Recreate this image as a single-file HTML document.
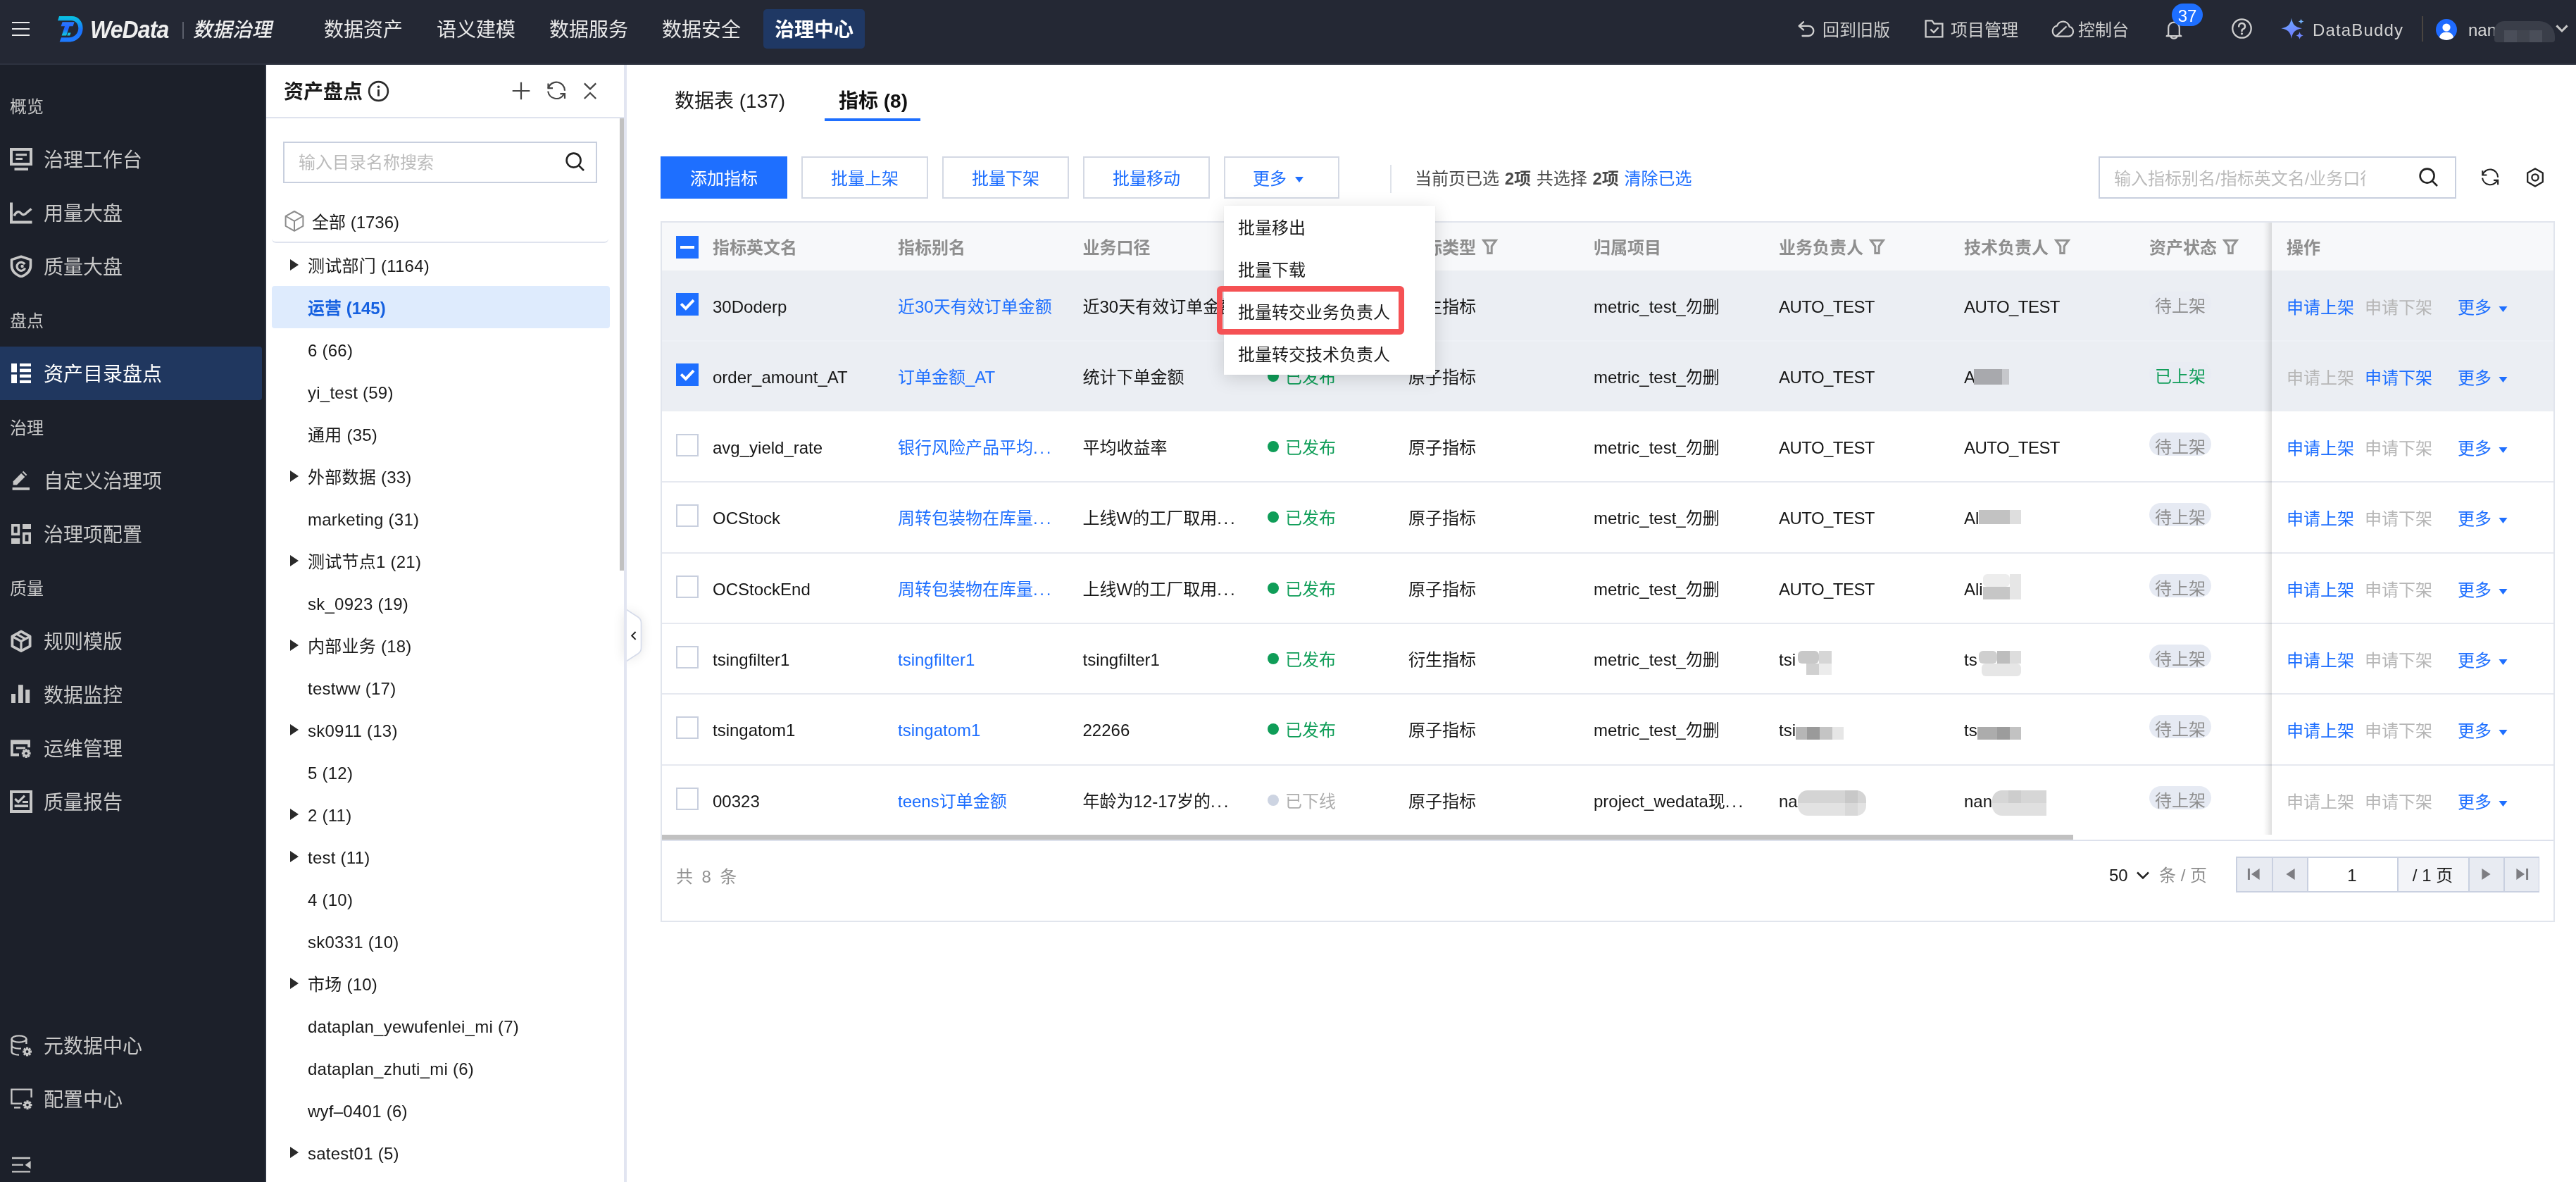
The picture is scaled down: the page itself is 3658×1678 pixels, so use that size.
<!DOCTYPE html>
<html lang="zh-CN"><head><meta charset="utf-8"><title>WeData 数据治理</title><style>
*{box-sizing:border-box}
html,body{margin:0;padding:0;overflow:hidden}
body{width:3658px;height:1678px;position:relative;overflow:hidden;background:#fff;font-family:"Liberation Sans","Noto Sans CJK SC",sans-serif;-webkit-font-smoothing:antialiased}
.t{position:absolute;white-space:nowrap}
#root{position:absolute;left:0;top:0;width:3658px;height:1678px;will-change:transform;transform:translateZ(0)}
.b{position:absolute;display:block}
</style></head><body><div id="root">
<div class="b" style="left:0px;top:0px;width:3658px;height:92px;background:#242834;"></div>
<div class="b" style="left:0px;top:90px;width:3658px;height:2px;background:#2d323f;"></div>
<div class="b" style="left:17px;top:31.2px;width:25px;height:2.2px;background:#ececec;"></div>
<div class="b" style="left:17px;top:40.2px;width:25px;height:2.2px;background:#ececec;"></div>
<div class="b" style="left:17px;top:49.2px;width:25px;height:2.2px;background:#ececec;"></div>
<svg class="b" style="left:81px;top:22px;" width="38" height="38" viewBox="0 0 38 38" fill="none"><defs><linearGradient id="lg1" x1="0" y1="0" x2="0" y2="1"><stop offset="0" stop-color="#08c4e0"/><stop offset="0.55" stop-color="#1a72ff"/><stop offset="1" stop-color="#1e7bff"/></linearGradient><linearGradient id="lg2" x1="0" y1="0" x2="0" y2="1"><stop offset="0" stop-color="#2a78ff"/><stop offset="0.5" stop-color="#1f63ff"/><stop offset="1" stop-color="#0fd0e0"/></linearGradient></defs><path d="M3 1 H21 C30 1 36.6 8.5 36.6 18 C36.6 29 28 37.5 17 37.5 H3.6 L6 31.2 H17 C24.5 31.2 30.3 25.5 30.3 18 C30.3 11.5 26 7.2 20.5 7.2 H1 Z" fill="url(#lg1)"/><path d="M7.6 9.3 H24.6 L22.6 15.2 H17.6 L13.2 28.6 H6.6 L11 15.2 H5.6 Z" fill="url(#lg2)"/><path d="M15.6 24.4 H19.6 L18.2 28.6 H14.2 Z" fill="#18c6e6"/></svg>
<span class="t " style="left:128px;top:20.0px;font-size:32px;line-height:44px;color:#efefef;font-weight:700;letter-spacing:-0.9px;font-style:italic;transform:scaleY(1.08);transform-origin:left center;">WeData</span>
<div class="b" style="left:259px;top:31px;width:2px;height:24px;background:#5b5f6b;"></div>
<span class="t " style="left:276px;top:23.0px;font-size:28px;line-height:40px;color:#efefef;font-weight:500;transform:skewX(-12deg);transform-origin:left center;">数据治理</span>
<span class="t " style="left:460px;top:23.0px;font-size:28px;line-height:40px;color:#e9e9e9;">数据资产</span>
<span class="t " style="left:620px;top:23.0px;font-size:28px;line-height:40px;color:#e9e9e9;">语义建模</span>
<span class="t " style="left:780px;top:23.0px;font-size:28px;line-height:40px;color:#e9e9e9;">数据服务</span>
<span class="t " style="left:940px;top:23.0px;font-size:28px;line-height:40px;color:#e9e9e9;">数据安全</span>
<div class="b" style="left:1084px;top:13px;width:144px;height:56px;background:#1f3864;border-radius:5px;"></div>
<span class="t " style="left:1100px;top:23.0px;font-size:28px;line-height:40px;color:#ffffff;font-weight:700;">治理中心</span>
<svg class="b" style="left:2552px;top:28px;" width="28" height="26" viewBox="0 0 28 26" fill="none"><path d="M9 3.2 L2.6 8.8 L9 14.4 M3.4 8.8 H16.2 A7.1 7.1 0 0 1 16.2 23 H7.5" stroke="#cfcfcf" stroke-width="2.3" stroke-linecap="round" stroke-linejoin="round"/></svg>
<span class="t " style="left:2588px;top:25.0px;font-size:24px;line-height:36px;color:#cfcfcf;">回到旧版</span>
<svg class="b" style="left:2732px;top:27px;" width="30" height="28" viewBox="0 0 30 28" fill="none"><path d="M2.6 2.4 H11.5 L14.5 6.6 H26.4 V25.4 H2.6 Z" stroke="#cfcfcf" stroke-width="2.3" stroke-linejoin="miter"/><path d="M9.4 14.6 L14 19 L20.6 12" stroke="#cfcfcf" stroke-width="2.3"/></svg>
<span class="t " style="left:2770px;top:25.0px;font-size:24px;line-height:36px;color:#cfcfcf;">项目管理</span>
<svg class="b" style="left:2911px;top:27px;" width="36" height="28" viewBox="0 0 36 28" fill="none"><path d="M9.5 24.6 H26.5 A7 7 0 0 0 27.6 10.8 A9.2 9.2 0 0 0 10 9.6 A7.7 7.7 0 0 0 9.5 24.6 Z" stroke="#cfcfcf" stroke-width="2.3" stroke-linejoin="round"/><path d="M9 24.2 L23.5 10.5" stroke="#cfcfcf" stroke-width="2.3"/></svg>
<span class="t " style="left:2951px;top:25.0px;font-size:24px;line-height:36px;color:#cfcfcf;">控制台</span>
<svg class="b" style="left:3075px;top:27px;" width="24" height="30" viewBox="0 0 24 30" fill="none"><path d="M4.2 22.6 V12.4 A7.8 7.8 0 0 1 19.8 12.4 V22.6 L22.4 24.2 H1.6 Z" stroke="#cfcfcf" stroke-width="2.2" stroke-linejoin="round"/><path d="M7.4 24.6 A4.8 4.2 0 0 0 16.6 24.6" stroke="#cfcfcf" stroke-width="2.2"/></svg>
<div class="b" style="left:3084px;top:5px;width:44px;height:32px;background:#1e6fff;border-radius:16px;"></div>
<span class="t " style="left:3084px;top:7.0px;font-size:24px;line-height:32px;color:#fff;width:44px;text-align:center;">37</span>
<svg class="b" style="left:3167.5px;top:25.4px;" width="31" height="31" viewBox="0 0 31 31" fill="none"><circle cx="15.5" cy="15.5" r="13.2" stroke="#cfcfcf" stroke-width="2.3"/><path d="M11.2 12.4 A4.4 4.4 0 1 1 16.6 16.6 Q15.5 17.2 15.5 19" stroke="#cfcfcf" stroke-width="2.5" stroke-linecap="round" fill="none"/><circle cx="15.5" cy="22.8" r="1.6" fill="#cfcfcf"/></svg>
<svg class="b" style="left:3238px;top:24px;" width="36" height="34" viewBox="0 0 36 34" fill="none"><defs><linearGradient id="sp" x1="0" y1="0" x2="0.3" y2="1"><stop offset="0" stop-color="#6db0ff"/><stop offset="1" stop-color="#6f7bff"/></linearGradient></defs><path d="M16 1.5 C17.4 10.5 21 14.6 31 16.3 C21 18 17.4 22 16 31 C14.6 22 11 18 1.5 16.3 C11 14.6 14.6 10.5 16 1.5 Z" fill="url(#sp)"/><path d="M29.6 2.6 C30.1 5.2 31 6.1 33.6 6.6 C31 7.1 30.1 8 29.6 10.6 C29.1 8 28.2 7.1 25.6 6.6 C28.2 6.1 29.1 5.2 29.6 2.6 Z" fill="#74b4ff"/><path d="M27.6 21 C28.3 24.4 29.4 25.6 32.8 26.4 C29.4 27.2 28.3 28.4 27.6 31.8 C26.9 28.4 25.8 27.2 22.4 26.4 C25.8 25.6 26.9 24.4 27.6 21 Z" fill="#6f86ff"/></svg>
<span class="t " style="left:3284px;top:25.0px;font-size:24px;line-height:36px;color:#d2d2d2;letter-spacing:1.15px;">DataBuddy</span>
<div class="b" style="left:3439px;top:23px;width:2px;height:36px;background:#4a4540;"></div>
<svg class="b" style="left:3459px;top:27px;" width="30" height="30" viewBox="0 0 30 30" fill="none"><defs><clipPath id="avc"><circle cx="15" cy="15" r="15"/></clipPath></defs><circle cx="15" cy="15" r="15" fill="#1f6bff"/><g clip-path="url(#avc)"><circle cx="15" cy="12" r="5.6" fill="#fff"/><path d="M4 32 C4 22 9 18.5 15 18.5 C21 18.5 26 22 26 32 Z" fill="#fff"/></g></svg>
<span class="t " style="left:3505px;top:25.0px;font-size:24px;line-height:36px;color:#d8d8d8;">nan</span>
<div class="b" style="left:3542px;top:30px;width:86px;height:30px;background:#3a3e49;border-radius:14px 22px 4px 4px;"></div>
<div class="b" style="left:3556px;top:43px;width:18px;height:17px;background:#4a4e59;"></div>
<div class="b" style="left:3574px;top:43px;width:18px;height:17px;background:#41454f;"></div>
<div class="b" style="left:3592px;top:43px;width:18px;height:17px;background:#4a4e59;"></div>
<svg class="b" style="left:3627px;top:33px;" width="22" height="16" viewBox="0 0 22 16" fill="none"><path d="M3.4 3.4 L11 11 L18.6 3.4" stroke="#c8c8c8" stroke-width="3"/></svg>
<div class="b" style="left:0px;top:92px;width:378px;height:1586px;background:#1c202a;border-right:2px solid #2d3340;"></div>
<span class="t " style="left:14px;top:134.0px;font-size:24px;line-height:36px;color:#c9c9c9;">概览</span>
<svg class="b" style="left:14px;top:210px;" width="32" height="32" viewBox="0 0 32 32" fill="none"><rect x="2" y="2" width="28" height="21" stroke="#c6c6c6" stroke-width="4"/><rect x="8.5" y="8.2" width="15.5" height="3" fill="#c6c6c6"/><rect x="8.5" y="14" width="9.5" height="3" fill="#c6c6c6"/><rect x="6.5" y="28.2" width="19.5" height="3.8" fill="#c6c6c6"/></svg>
<span class="t " style="left:62px;top:208.0px;font-size:28px;line-height:40px;color:#c9c9c9;">治理工作台</span>
<svg class="b" style="left:14px;top:286px;" width="32" height="32" viewBox="0 0 32 32" fill="none"><path d="M2 1.5 V29.5 H31.5" stroke="#c6c6c6" stroke-width="4"/><path d="M6 20.5 C9 14.5 12.5 13 15.5 16.5 C18.5 20 21.5 19 24.5 15.5 L30.5 10.5" stroke="#c6c6c6" stroke-width="3.4"/></svg>
<span class="t " style="left:62px;top:284.0px;font-size:28px;line-height:40px;color:#c9c9c9;">用量大盘</span>
<svg class="b" style="left:14px;top:362px;" width="32" height="32" viewBox="0 0 32 32" fill="none"><path d="M16 2.2 L29.5 6.6 V15 C29.5 23 23.5 28 16 30.8 C8.5 28 2.5 23 2.5 15 V6.6 Z" stroke="#c6c6c6" stroke-width="3.6" stroke-linejoin="round"/><path d="M21.2 13.2 A6 6 0 1 0 21.6 18.6" stroke="#c6c6c6" stroke-width="3.2"/><circle cx="17.6" cy="16" r="2.2" fill="#c6c6c6"/></svg>
<span class="t " style="left:62px;top:360.0px;font-size:28px;line-height:40px;color:#c9c9c9;">质量大盘</span>
<span class="t " style="left:14px;top:438.0px;font-size:24px;line-height:36px;color:#c9c9c9;">盘点</span>
<div class="b" style="left:0px;top:492px;width:372px;height:76px;background:#20375f;border-radius:0 4px 4px 0;"></div>
<svg class="b" style="left:14px;top:514px;" width="32" height="32" viewBox="0 0 32 32" fill="none"><rect x="2" y="2" width="8" height="12.4" fill="#ffffff"/><rect x="2" y="17.6" width="8" height="12.4" fill="#ffffff"/><rect x="14" y="2" width="16" height="4.2" fill="#ffffff"/><rect x="14" y="9.6" width="16" height="4.6" fill="#ffffff"/><rect x="14" y="17.6" width="16" height="4.4" fill="#ffffff"/><rect x="14" y="25.8" width="16" height="4.2" fill="#ffffff"/></svg>
<span class="t " style="left:62px;top:512.0px;font-size:28px;line-height:40px;color:#ffffff;">资产目录盘点</span>
<span class="t " style="left:14px;top:590.0px;font-size:24px;line-height:36px;color:#c9c9c9;">治理</span>
<svg class="b" style="left:14px;top:666px;" width="32" height="32" viewBox="0 0 32 32" fill="none"><path d="M4.6 22.6 V17.4 L19.2 2.8 L24.4 8 L9.8 22.6 Z" fill="#c6c6c6"/><path d="M16.2 4.4 L22.6 10.8" stroke="#1c202a" stroke-width="2.2"/><rect x="3.6" y="26" width="24.4" height="3.8" fill="#c6c6c6"/></svg>
<span class="t " style="left:62px;top:664.0px;font-size:28px;line-height:40px;color:#c9c9c9;">自定义治理项</span>
<svg class="b" style="left:14px;top:742px;" width="32" height="32" viewBox="0 0 32 32" fill="none"><rect x="3.8" y="3.8" width="8.6" height="12.6" stroke="#c6c6c6" stroke-width="3.6"/><rect x="18" y="2" width="12" height="7" fill="#c6c6c6"/><rect x="2" y="22.2" width="12.2" height="7.8" fill="#c6c6c6"/><rect x="19.8" y="15.4" width="8.4" height="12.8" stroke="#c6c6c6" stroke-width="3.6"/></svg>
<span class="t " style="left:62px;top:740.0px;font-size:28px;line-height:40px;color:#c9c9c9;">治理项配置</span>
<span class="t " style="left:14px;top:818.0px;font-size:24px;line-height:36px;color:#c9c9c9;">质量</span>
<svg class="b" style="left:14px;top:894px;" width="32" height="32" viewBox="0 0 32 32" fill="none"><path d="M16 2.4 L28.6 9.4 V23.4 L16 30.2 L3.4 23.4 V9.4 Z" stroke="#c6c6c6" stroke-width="3.8" stroke-linejoin="round"/><path d="M4.4 10 L16 16.4 L27.6 10 M16 16.4 V29.6 M10 6.4 L21.6 12.8" stroke="#c6c6c6" stroke-width="3.2"/></svg>
<span class="t " style="left:62px;top:892.0px;font-size:28px;line-height:40px;color:#c9c9c9;">规则模版</span>
<svg class="b" style="left:14px;top:970px;" width="32" height="32" viewBox="0 0 32 32" fill="none"><rect x="2" y="15" width="6" height="13" fill="#c6c6c6"/><rect x="12" y="2.2" width="6.8" height="25.8" fill="#c6c6c6"/><rect x="22.2" y="9" width="6" height="19" fill="#c6c6c6"/></svg>
<span class="t " style="left:62px;top:968.0px;font-size:28px;line-height:40px;color:#c9c9c9;">数据监控</span>
<svg class="b" style="left:14px;top:1046px;" width="32" height="32" viewBox="0 0 32 32" fill="none"><path d="M13 25.5 H2.9 V6 M27.1 6 V15" stroke="#c6c6c6" stroke-width="3.8"/><rect x="1" y="4.4" width="28" height="6" fill="#c6c6c6"/><rect x="9" y="14.4" width="13" height="3" fill="#c6c6c6"/><path d="M26.72 23.60 L29.60 23.60" stroke="#c6c6c6" stroke-width="3.20"/><path d="M25.69 26.09 L27.73 28.13" stroke="#c6c6c6" stroke-width="3.20"/><path d="M23.20 27.12 L23.20 30.00" stroke="#c6c6c6" stroke-width="3.20"/><path d="M20.71 26.09 L18.67 28.13" stroke="#c6c6c6" stroke-width="3.20"/><path d="M19.68 23.60 L16.80 23.60" stroke="#c6c6c6" stroke-width="3.20"/><path d="M20.71 21.11 L18.67 19.07" stroke="#c6c6c6" stroke-width="3.20"/><path d="M23.20 20.08 L23.20 17.20" stroke="#c6c6c6" stroke-width="3.20"/><path d="M25.69 21.11 L27.73 19.07" stroke="#c6c6c6" stroke-width="3.20"/><circle cx="23.2" cy="23.6" r="4.61" fill="#c6c6c6"/><circle cx="23.2" cy="23.6" r="1.92" fill="#1c202a"/></svg>
<span class="t " style="left:62px;top:1044.0px;font-size:28px;line-height:40px;color:#c9c9c9;">运维管理</span>
<svg class="b" style="left:14px;top:1122px;" width="32" height="32" viewBox="0 0 32 32" fill="none"><rect x="2" y="2" width="28" height="28" stroke="#c6c6c6" stroke-width="4"/><path d="M7.4 12 L12 16.6 L21 7.6" stroke="#c6c6c6" stroke-width="3.2"/><rect x="6.6" y="20.4" width="19.4" height="3.6" fill="#c6c6c6"/><rect x="18" y="15" width="8" height="3" fill="#c6c6c6"/></svg>
<span class="t " style="left:62px;top:1120.0px;font-size:28px;line-height:40px;color:#c9c9c9;">质量报告</span>
<svg class="b" style="left:14px;top:1468px;" width="32" height="32" viewBox="0 0 32 32" fill="none"><ellipse cx="13" cy="7" rx="10.4" ry="4.6" stroke="#c6c6c6" stroke-width="2.4"/><path d="M2.6 7 V25 C2.6 27.6 7 29.6 13 29.6 M23.4 7 V14 M2.6 16 C2.6 18.6 7 20.6 13 20.6 C14 20.6 15 20.5 16 20.4" stroke="#c6c6c6" stroke-width="2.4"/><path d="M28.12 25.00 L31.00 25.00" stroke="#c6c6c6" stroke-width="3.20"/><path d="M27.09 27.49 L29.13 29.53" stroke="#c6c6c6" stroke-width="3.20"/><path d="M24.60 28.52 L24.60 31.40" stroke="#c6c6c6" stroke-width="3.20"/><path d="M22.11 27.49 L20.07 29.53" stroke="#c6c6c6" stroke-width="3.20"/><path d="M21.08 25.00 L18.20 25.00" stroke="#c6c6c6" stroke-width="3.20"/><path d="M22.11 22.51 L20.07 20.47" stroke="#c6c6c6" stroke-width="3.20"/><path d="M24.60 21.48 L24.60 18.60" stroke="#c6c6c6" stroke-width="3.20"/><path d="M27.09 22.51 L29.13 20.47" stroke="#c6c6c6" stroke-width="3.20"/><circle cx="24.6" cy="25" r="4.61" fill="#c6c6c6"/><circle cx="24.6" cy="25" r="1.92" fill="#1c202a"/></svg>
<span class="t " style="left:62px;top:1466.0px;font-size:28px;line-height:40px;color:#c9c9c9;">元数据中心</span>
<svg class="b" style="left:14px;top:1544px;" width="32" height="32" viewBox="0 0 32 32" fill="none"><path d="M17 22.6 H2.4 V2.6 H30.6 V14" stroke="#c6c6c6" stroke-width="2.4"/><path d="M6 28.4 H15" stroke="#c6c6c6" stroke-width="2.4"/><path d="M28.52 24.60 L31.40 24.60" stroke="#c6c6c6" stroke-width="3.20"/><path d="M27.49 27.09 L29.53 29.13" stroke="#c6c6c6" stroke-width="3.20"/><path d="M25.00 28.12 L25.00 31.00" stroke="#c6c6c6" stroke-width="3.20"/><path d="M22.51 27.09 L20.47 29.13" stroke="#c6c6c6" stroke-width="3.20"/><path d="M21.48 24.60 L18.60 24.60" stroke="#c6c6c6" stroke-width="3.20"/><path d="M22.51 22.11 L20.47 20.07" stroke="#c6c6c6" stroke-width="3.20"/><path d="M25.00 21.08 L25.00 18.20" stroke="#c6c6c6" stroke-width="3.20"/><path d="M27.49 22.11 L29.53 20.07" stroke="#c6c6c6" stroke-width="3.20"/><circle cx="25" cy="24.6" r="4.61" fill="#c6c6c6"/><circle cx="25" cy="24.6" r="1.92" fill="#1c202a"/></svg>
<span class="t " style="left:62px;top:1542.0px;font-size:28px;line-height:40px;color:#c9c9c9;">配置中心</span>
<svg class="b" style="left:16px;top:1640px;" width="30" height="28" viewBox="0 0 30 28" fill="none"><path d="M1 4 H27 M1 13.6 H17 M1 23.4 H27" stroke="#c6c6c6" stroke-width="2.4"/><path d="M27.6 8 V19.6 L19.6 13.8 Z" fill="#c6c6c6"/></svg>
<div class="b" style="left:378px;top:92px;width:508px;height:1586px;background:#fff;"></div>
<div class="b" style="left:886px;top:92px;width:4px;height:1586px;background:#e2e5f1;"></div>
<span class="t " style="left:403px;top:111.0px;font-size:28px;line-height:40px;color:#1a1a1a;font-weight:700;">资产盘点</span>
<svg class="b" style="left:522px;top:114px;" width="31" height="31" viewBox="0 0 31 31" fill="none"><circle cx="15.5" cy="15.5" r="13.4" stroke="#2b2b2b" stroke-width="2.6"/><rect x="14.1" y="13" width="2.8" height="9.6" fill="#2b2b2b"/><circle cx="15.5" cy="9.2" r="1.8" fill="#2b2b2b"/></svg>
<svg class="b" style="left:726px;top:115px;" width="28" height="28" viewBox="0 0 28 28" fill="none"><path d="M14 1.7 V26.3 M1.7 14 H26.3" stroke="#454545" stroke-width="2.2"/></svg>
<svg class="b" style="left:776px;top:115px;" width="28" height="28" viewBox="0 0 28 28" fill="none"><path d="M2.5 10.2 A12 12 0 0 1 26 13.7" stroke="#454545" stroke-width="2.2"/><path d="M2.5 3.6 V10.2 H9" stroke="#454545" stroke-width="2.2"/><path d="M2.2 14.6 A12.1 12.1 0 0 0 24.6 19" stroke="#454545" stroke-width="2.2"/><path d="M19.4 18.2 H26 V25" stroke="#454545" stroke-width="2.2"/></svg>
<svg class="b" style="left:828px;top:116px;" width="20" height="26" viewBox="0 0 20 26" fill="none"><path d="M1.8 2.4 L10 10.4 L18.2 2.4 M1.8 24 L10 16 L18.2 24" stroke="#454545" stroke-width="2.3"/></svg>
<div class="b" style="left:378px;top:166px;width:508px;height:2px;background:#dfe3ee;"></div>
<div class="b" style="left:880px;top:168px;width:6px;height:642px;background:#c1c1c1;"></div>
<div class="b" style="left:402px;top:201px;width:446px;height:59px;border:2px solid #c8cfde;background:#fff;"></div>
<span class="t " style="left:424px;top:213.0px;font-size:24px;line-height:36px;color:#bbbbbb;">输入目录名称搜索</span>
<svg class="b" style="left:802px;top:215px;" width="30" height="30" viewBox="0 0 30 30" fill="none"><circle cx="12.6" cy="12.6" r="10" stroke="#222" stroke-width="2.6"/><path d="M19.8 19.8 L27 27" stroke="#222" stroke-width="2.6"/></svg>
<svg class="b" style="left:403px;top:298px;" width="30" height="32" viewBox="0 0 30 32" fill="none"><path d="M15 2 L27.4 8.8 V22.8 L15 29.8 L2.6 22.8 V8.8 Z" stroke="#8c8c8c" stroke-width="2" stroke-linejoin="round"/><path d="M3 9 L15 15.8 L27 9 M15 15.8 V29.4" stroke="#8c8c8c" stroke-width="2"/></svg>
<span class="t " style="left:443px;top:298.0px;font-size:24px;line-height:36px;color:#1a1a1a;">全部 (1736)</span>
<div class="b" style="left:386px;top:300px;width:478px;height:45px;border-bottom:2px solid #dfe3ee;border-radius:0 0 6px 6px;"></div>
<span class="t " style="left:437px;top:360.0px;font-size:24px;line-height:36px;color:#1a1a1a;letter-spacing:0.25px;">测试部门 (1164)</span>
<svg class="b" style="left:411px;top:367px;" width="14" height="18" viewBox="0 0 14 18" fill="none"><path d="M1 1 L13 9 L1 17 Z" fill="#2a2a2a"/></svg>
<div class="b" style="left:386px;top:406px;width:480px;height:60px;background:#deebfd;border-radius:4px;"></div>
<span class="t " style="left:437px;top:420.0px;font-size:24px;line-height:36px;color:#1560e0;font-weight:700;">运营 (145)</span>
<span class="t " style="left:437px;top:480.0px;font-size:24px;line-height:36px;color:#1a1a1a;letter-spacing:0.25px;">6 (66)</span>
<span class="t " style="left:437px;top:540.0px;font-size:24px;line-height:36px;color:#1a1a1a;letter-spacing:0.25px;">yi_test (59)</span>
<span class="t " style="left:437px;top:600.0px;font-size:24px;line-height:36px;color:#1a1a1a;letter-spacing:0.25px;">通用 (35)</span>
<span class="t " style="left:437px;top:660.0px;font-size:24px;line-height:36px;color:#1a1a1a;letter-spacing:0.25px;">外部数据 (33)</span>
<svg class="b" style="left:411px;top:667px;" width="14" height="18" viewBox="0 0 14 18" fill="none"><path d="M1 1 L13 9 L1 17 Z" fill="#2a2a2a"/></svg>
<span class="t " style="left:437px;top:720.0px;font-size:24px;line-height:36px;color:#1a1a1a;letter-spacing:0.25px;">marketing (31)</span>
<span class="t " style="left:437px;top:780.0px;font-size:24px;line-height:36px;color:#1a1a1a;letter-spacing:0.25px;">测试节点1 (21)</span>
<svg class="b" style="left:411px;top:787px;" width="14" height="18" viewBox="0 0 14 18" fill="none"><path d="M1 1 L13 9 L1 17 Z" fill="#2a2a2a"/></svg>
<span class="t " style="left:437px;top:840.0px;font-size:24px;line-height:36px;color:#1a1a1a;letter-spacing:0.25px;">sk_0923 (19)</span>
<span class="t " style="left:437px;top:900.0px;font-size:24px;line-height:36px;color:#1a1a1a;letter-spacing:0.25px;">内部业务 (18)</span>
<svg class="b" style="left:411px;top:907px;" width="14" height="18" viewBox="0 0 14 18" fill="none"><path d="M1 1 L13 9 L1 17 Z" fill="#2a2a2a"/></svg>
<span class="t " style="left:437px;top:960.0px;font-size:24px;line-height:36px;color:#1a1a1a;letter-spacing:0.25px;">testww (17)</span>
<span class="t " style="left:437px;top:1020.0px;font-size:24px;line-height:36px;color:#1a1a1a;letter-spacing:0.25px;">sk0911 (13)</span>
<svg class="b" style="left:411px;top:1027px;" width="14" height="18" viewBox="0 0 14 18" fill="none"><path d="M1 1 L13 9 L1 17 Z" fill="#2a2a2a"/></svg>
<span class="t " style="left:437px;top:1080.0px;font-size:24px;line-height:36px;color:#1a1a1a;letter-spacing:0.25px;">5 (12)</span>
<span class="t " style="left:437px;top:1140.0px;font-size:24px;line-height:36px;color:#1a1a1a;letter-spacing:0.25px;">2 (11)</span>
<svg class="b" style="left:411px;top:1147px;" width="14" height="18" viewBox="0 0 14 18" fill="none"><path d="M1 1 L13 9 L1 17 Z" fill="#2a2a2a"/></svg>
<span class="t " style="left:437px;top:1200.0px;font-size:24px;line-height:36px;color:#1a1a1a;letter-spacing:0.25px;">test (11)</span>
<svg class="b" style="left:411px;top:1207px;" width="14" height="18" viewBox="0 0 14 18" fill="none"><path d="M1 1 L13 9 L1 17 Z" fill="#2a2a2a"/></svg>
<span class="t " style="left:437px;top:1260.0px;font-size:24px;line-height:36px;color:#1a1a1a;letter-spacing:0.25px;">4 (10)</span>
<span class="t " style="left:437px;top:1320.0px;font-size:24px;line-height:36px;color:#1a1a1a;letter-spacing:0.25px;">sk0331 (10)</span>
<span class="t " style="left:437px;top:1380.0px;font-size:24px;line-height:36px;color:#1a1a1a;letter-spacing:0.25px;">市场 (10)</span>
<svg class="b" style="left:411px;top:1387px;" width="14" height="18" viewBox="0 0 14 18" fill="none"><path d="M1 1 L13 9 L1 17 Z" fill="#2a2a2a"/></svg>
<span class="t " style="left:437px;top:1440.0px;font-size:24px;line-height:36px;color:#1a1a1a;letter-spacing:0.25px;">dataplan_yewufenlei_mi (7)</span>
<span class="t " style="left:437px;top:1500.0px;font-size:24px;line-height:36px;color:#1a1a1a;letter-spacing:0.25px;">dataplan_zhuti_mi (6)</span>
<span class="t " style="left:437px;top:1560.0px;font-size:24px;line-height:36px;color:#1a1a1a;letter-spacing:0.25px;">wyf–0401 (6)</span>
<span class="t " style="left:437px;top:1620.0px;font-size:24px;line-height:36px;color:#1a1a1a;letter-spacing:0.25px;">satest01 (5)</span>
<svg class="b" style="left:411px;top:1627px;" width="14" height="18" viewBox="0 0 14 18" fill="none"><path d="M1 1 L13 9 L1 17 Z" fill="#2a2a2a"/></svg>
<svg class="b" style="left:866px;top:840px;" width="70" height="124" viewBox="0 0 70 124" fill="none"><defs><filter id="hs" x="-100%" y="-50%" width="300%" height="200%"><feGaussianBlur stdDeviation="9"/></filter></defs><path d="M22 26 L40 37 Q44 40 44 45 V79 Q44 84 40 87 L22 98 Z" fill="#000" opacity="0.13" filter="url(#hs)"/><path d="M23 25 L40 36 Q44.5 39 44.5 44 V80 Q44.5 85 40 88 L23 99 Z" fill="#fff" stroke="#d5dbea" stroke-width="1.6"/><path d="M36.6 57 L31.2 62.4 L36.6 67.8" stroke="#1a1a1a" stroke-width="1.9"/></svg>
<div class="b" style="left:886px;top:92px;width:4px;height:1586px;background:#e2e5f1;"></div>
<span class="t " style="left:958px;top:124.0px;font-size:28px;line-height:40px;color:#1a1a1a;">数据表 (137)</span>
<span class="t " style="left:1191px;top:124.0px;font-size:28px;line-height:40px;color:#111;font-weight:700;">指标 (8)</span>
<div class="b" style="left:1171px;top:168px;width:136px;height:4px;background:#1e6fff;"></div>
<div class="b" style="left:938px;top:222px;width:180px;height:60px;background:#1e6fff;"></div>
<span class="t " style="left:938px;top:236.0px;font-size:24px;line-height:36px;color:#fff;width:180px;text-align:center;">添加指标</span>
<div class="b" style="left:1138px;top:222px;width:180px;height:60px;border:2px solid #d4d9e4;background:#fff;"></div>
<span class="t " style="left:1138px;top:236.0px;font-size:24px;line-height:36px;color:#1e6fff;width:180px;text-align:center;">批量上架</span>
<div class="b" style="left:1338px;top:222px;width:180px;height:60px;border:2px solid #d4d9e4;background:#fff;"></div>
<span class="t " style="left:1338px;top:236.0px;font-size:24px;line-height:36px;color:#1e6fff;width:180px;text-align:center;">批量下架</span>
<div class="b" style="left:1538px;top:222px;width:180px;height:60px;border:2px solid #d4d9e4;background:#fff;"></div>
<span class="t " style="left:1538px;top:236.0px;font-size:24px;line-height:36px;color:#1e6fff;width:180px;text-align:center;">批量移动</span>
<div class="b" style="left:1738px;top:222px;width:164px;height:60px;border:2px solid #d4d9e4;background:#fff;"></div>
<span class="t " style="left:1779px;top:236.0px;font-size:24px;line-height:36px;color:#1e6fff;">更多</span>
<svg class="b" style="left:1838px;top:250px;" width="14" height="10" viewBox="0 0 14 10" fill="none"><path d="M1 1 H13 L7 9 Z" fill="#1e6fff"/></svg>
<div class="b" style="left:1974px;top:234px;width:2px;height:40px;background:#dfe3ea;"></div>
<span class="t " style="left:2009px;top:236.0px;font-size:24px;line-height:36px;color:#4a4a4a;word-spacing:1px;">当前页已选 <b style="color:#4a4a4a">2项</b> 共选择 <b style="color:#4a4a4a">2项</b> <span style="color:#1e6fff">清除已选</span></span>
<div class="b" style="left:2980px;top:222px;width:508px;height:60px;border:2px solid #c8cfde;background:#fff;"></div>
<span class="t " style="left:3002px;top:236.0px;font-size:24px;line-height:36px;color:#bbbbbb;width:357px;overflow:hidden;">输入指标别名/指标英文名/业务口径</span>
<svg class="b" style="left:3434px;top:236.5px;" width="30" height="30" viewBox="0 0 30 30" fill="none"><circle cx="12.6" cy="12.6" r="10" stroke="#222" stroke-width="2.6"/><path d="M19.8 19.8 L27 27" stroke="#222" stroke-width="2.6"/></svg>
<svg class="b" style="left:3523px;top:239px;" width="26" height="26" viewBox="0 0 28 28" fill="none"><path d="M2.5 10.2 A12 12 0 0 1 26 13.7" stroke="#222" stroke-width="2.3"/><path d="M2.5 3.6 V10.2 H9" stroke="#222" stroke-width="2.3"/><path d="M2.2 14.6 A12.1 12.1 0 0 0 24.6 19" stroke="#222" stroke-width="2.3"/><path d="M19.4 18.2 H26 V25" stroke="#222" stroke-width="2.3"/></svg>
<svg class="b" style="left:3585px;top:236px;" width="30" height="32" viewBox="0 0 30 32" fill="none"><path d="M15 3.4 L25.8 9.6 V22.2 L15 28.4 L4.2 22.2 V9.6 Z" stroke="#222" stroke-width="2.3" stroke-linejoin="round"/><circle cx="15" cy="15.9" r="4.6" stroke="#222" stroke-width="2.3"/></svg>
<div class="b" style="left:938px;top:314px;width:2690px;height:995px;border:2px solid #e1e5ed;background:#fff;"></div>
<div class="b" style="left:940px;top:316px;width:2686px;height:68px;background:#f7f8fa;"></div>
<div class="b" style="left:940px;top:384px;width:2686px;height:200px;background:#ebeef3;"></div>
<div class="b" style="left:940px;top:483px;width:2686px;height:2px;background:#eef1f6;"></div>
<div class="b" style="left:940px;top:683.3px;width:2686px;height:2px;background:#e6e9f0;"></div>
<div class="b" style="left:940px;top:783.6px;width:2686px;height:2px;background:#e6e9f0;"></div>
<div class="b" style="left:940px;top:884px;width:2686px;height:2px;background:#e6e9f0;"></div>
<div class="b" style="left:940px;top:984.3px;width:2686px;height:2px;background:#e6e9f0;"></div>
<div class="b" style="left:940px;top:1084.6px;width:2686px;height:2px;background:#e6e9f0;"></div>

<span class="t " style="left:1012px;top:334.0px;font-size:24px;line-height:36px;color:#8e8e8e;font-weight:700;">指标英文名</span>
<span class="t " style="left:1275px;top:334.0px;font-size:24px;line-height:36px;color:#8e8e8e;font-weight:700;">指标别名</span>
<span class="t " style="left:1537.5px;top:334.0px;font-size:24px;line-height:36px;color:#8e8e8e;font-weight:700;">业务口径</span>
<span class="t " style="left:1800px;top:334.0px;font-size:24px;line-height:36px;color:#8e8e8e;font-weight:700;">状态</span>
<span class="t " style="left:2000px;top:334.0px;font-size:24px;line-height:36px;color:#8e8e8e;font-weight:700;">指标类型</span>
<svg class="b" style="left:2104px;top:339px;" width="24" height="24" viewBox="0 0 24 24" fill="none"><path d="M2.6 2.2 H20.4 L14.2 10.6 V20.4 H8.8 V10.6 Z" stroke="#939393" stroke-width="3" stroke-linejoin="miter"/></svg>
<span class="t " style="left:2263px;top:334.0px;font-size:24px;line-height:36px;color:#8e8e8e;font-weight:700;">归属项目</span>
<span class="t " style="left:2526px;top:334.0px;font-size:24px;line-height:36px;color:#8e8e8e;font-weight:700;">业务负责人</span>
<svg class="b" style="left:2654px;top:339px;" width="24" height="24" viewBox="0 0 24 24" fill="none"><path d="M2.6 2.2 H20.4 L14.2 10.6 V20.4 H8.8 V10.6 Z" stroke="#939393" stroke-width="3" stroke-linejoin="miter"/></svg>
<span class="t " style="left:2789px;top:334.0px;font-size:24px;line-height:36px;color:#8e8e8e;font-weight:700;">技术负责人</span>
<svg class="b" style="left:2917px;top:339px;" width="24" height="24" viewBox="0 0 24 24" fill="none"><path d="M2.6 2.2 H20.4 L14.2 10.6 V20.4 H8.8 V10.6 Z" stroke="#939393" stroke-width="3" stroke-linejoin="miter"/></svg>
<span class="t " style="left:3052px;top:334.0px;font-size:24px;line-height:36px;color:#8e8e8e;font-weight:700;">资产状态</span>
<svg class="b" style="left:3156px;top:339px;" width="24" height="24" viewBox="0 0 24 24" fill="none"><path d="M2.6 2.2 H20.4 L14.2 10.6 V20.4 H8.8 V10.6 Z" stroke="#939393" stroke-width="3" stroke-linejoin="miter"/></svg>
<div class="b" style="left:960px;top:335px;width:32px;height:32px;background:#1e6fff;"></div>
<div class="b" style="left:966px;top:349px;width:20px;height:4px;background:#fff;"></div>
<div class="b" style="left:960px;top:416.1px;width:32px;height:32px;background:#1e6fff;"></div>
<svg class="b" style="left:960px;top:416.1px;" width="32" height="32" viewBox="0 0 32 32" fill="none"><path d="M7.2 15.4 L13.8 22 L25 10.2" stroke="#fff" stroke-width="4"/></svg>
<span class="t " style="left:1012px;top:418.1px;font-size:24px;line-height:36px;color:#161616;">30Doderp</span>
<span class="t " style="left:1275px;top:418.1px;font-size:24px;line-height:36px;color:#1e6fff;">近30天有效订单金额</span>
<span class="t " style="left:1537.5px;top:418.1px;font-size:24px;line-height:36px;color:#161616;">近30天有效订单金额</span>
<div class="b" style="left:1800px;top:426.1px;width:16px;height:16px;background:#0f9d58;border-radius:50%;"></div>
<span class="t " style="left:1825px;top:418.1px;font-size:24px;line-height:36px;color:#0f9d58;">已发布</span>
<span class="t " style="left:2000px;top:418.1px;font-size:24px;line-height:36px;color:#161616;">衍生指标</span>
<span class="t " style="left:2263px;top:418.1px;font-size:24px;line-height:36px;color:#161616;">metric_test_勿删</span>
<span class="t " style="left:2526px;top:418.1px;font-size:24px;line-height:36px;color:#161616;letter-spacing:-0.55px;">AUTO_TEST</span>
<span class="t " style="left:2789px;top:418.1px;font-size:24px;line-height:36px;color:#161616;letter-spacing:-0.55px;">AUTO_TEST</span>
<div class="b" style="left:3052px;top:414.1px;width:88px;height:33px;background:#e9ecf3;border-radius:17px;"></div>
<span class="t " style="left:3052px;top:417.1px;font-size:24px;line-height:36px;color:#8e8e8e;width:88px;text-align:center;">待上架</span>
<div class="b" style="left:960px;top:516.1px;width:32px;height:32px;background:#1e6fff;"></div>
<svg class="b" style="left:960px;top:516.1px;" width="32" height="32" viewBox="0 0 32 32" fill="none"><path d="M7.2 15.4 L13.8 22 L25 10.2" stroke="#fff" stroke-width="4"/></svg>
<span class="t " style="left:1012px;top:518.1px;font-size:24px;line-height:36px;color:#161616;">order_amount_AT</span>
<span class="t " style="left:1275px;top:518.1px;font-size:24px;line-height:36px;color:#1e6fff;">订单金额_AT</span>
<span class="t " style="left:1537.5px;top:518.1px;font-size:24px;line-height:36px;color:#161616;">统计下单金额</span>
<div class="b" style="left:1800px;top:526.1px;width:16px;height:16px;background:#0f9d58;border-radius:50%;"></div>
<span class="t " style="left:1825px;top:518.1px;font-size:24px;line-height:36px;color:#0f9d58;">已发布</span>
<span class="t " style="left:2000px;top:518.1px;font-size:24px;line-height:36px;color:#161616;">原子指标</span>
<span class="t " style="left:2263px;top:518.1px;font-size:24px;line-height:36px;color:#161616;">metric_test_勿删</span>
<span class="t " style="left:2526px;top:518.1px;font-size:24px;line-height:36px;color:#161616;letter-spacing:-0.55px;">AUTO_TEST</span>
<span class="t " style="left:2789px;top:518.1px;font-size:24px;line-height:36px;color:#161616;">A</span>
<div class="b" style="left:3052px;top:514.1px;width:88px;height:33px;background:#e9ecf3;border-radius:17px;"></div>
<span class="t " style="left:3052px;top:517.1px;font-size:24px;line-height:36px;color:#0f9d58;width:88px;text-align:center;">已上架</span>
<div class="b" style="left:960px;top:616.1px;width:32px;height:32px;border:2px solid #c8cfde;background:#fff;"></div>
<span class="t " style="left:1012px;top:618.1px;font-size:24px;line-height:36px;color:#161616;">avg_yield_rate</span>
<span class="t " style="left:1275px;top:618.1px;font-size:24px;line-height:36px;color:#1e6fff;">银行风险产品平均<span style="letter-spacing:2.7px">...</span></span>
<span class="t " style="left:1537.5px;top:618.1px;font-size:24px;line-height:36px;color:#161616;">平均收益率</span>
<div class="b" style="left:1800px;top:626.1px;width:16px;height:16px;background:#0f9d58;border-radius:50%;"></div>
<span class="t " style="left:1825px;top:618.1px;font-size:24px;line-height:36px;color:#0f9d58;">已发布</span>
<span class="t " style="left:2000px;top:618.1px;font-size:24px;line-height:36px;color:#161616;">原子指标</span>
<span class="t " style="left:2263px;top:618.1px;font-size:24px;line-height:36px;color:#161616;">metric_test_勿删</span>
<span class="t " style="left:2526px;top:618.1px;font-size:24px;line-height:36px;color:#161616;letter-spacing:-0.55px;">AUTO_TEST</span>
<span class="t " style="left:2789px;top:618.1px;font-size:24px;line-height:36px;color:#161616;letter-spacing:-0.55px;">AUTO_TEST</span>
<div class="b" style="left:3052px;top:614.1px;width:88px;height:33px;background:#e6eaf3;border-radius:17px;"></div>
<span class="t " style="left:3052px;top:617.1px;font-size:24px;line-height:36px;color:#8e8e8e;width:88px;text-align:center;">待上架</span>
<div class="b" style="left:960px;top:716.4px;width:32px;height:32px;border:2px solid #c8cfde;background:#fff;"></div>
<span class="t " style="left:1012px;top:718.4px;font-size:24px;line-height:36px;color:#161616;">OCStock</span>
<span class="t " style="left:1275px;top:718.4px;font-size:24px;line-height:36px;color:#1e6fff;">周转包装物在库量<span style="letter-spacing:2.7px">...</span></span>
<span class="t " style="left:1537.5px;top:718.4px;font-size:24px;line-height:36px;color:#161616;">上线W的工厂取用<span style="letter-spacing:2.7px">...</span></span>
<div class="b" style="left:1800px;top:726.4px;width:16px;height:16px;background:#0f9d58;border-radius:50%;"></div>
<span class="t " style="left:1825px;top:718.4px;font-size:24px;line-height:36px;color:#0f9d58;">已发布</span>
<span class="t " style="left:2000px;top:718.4px;font-size:24px;line-height:36px;color:#161616;">原子指标</span>
<span class="t " style="left:2263px;top:718.4px;font-size:24px;line-height:36px;color:#161616;">metric_test_勿删</span>
<span class="t " style="left:2526px;top:718.4px;font-size:24px;line-height:36px;color:#161616;letter-spacing:-0.55px;">AUTO_TEST</span>
<span class="t " style="left:2789px;top:718.4px;font-size:24px;line-height:36px;color:#161616;">Al</span>
<div class="b" style="left:3052px;top:714.4px;width:88px;height:33px;background:#e6eaf3;border-radius:17px;"></div>
<span class="t " style="left:3052px;top:717.4px;font-size:24px;line-height:36px;color:#8e8e8e;width:88px;text-align:center;">待上架</span>
<div class="b" style="left:960px;top:816.7px;width:32px;height:32px;border:2px solid #c8cfde;background:#fff;"></div>
<span class="t " style="left:1012px;top:818.7px;font-size:24px;line-height:36px;color:#161616;">OCStockEnd</span>
<span class="t " style="left:1275px;top:818.7px;font-size:24px;line-height:36px;color:#1e6fff;">周转包装物在库量<span style="letter-spacing:2.7px">...</span></span>
<span class="t " style="left:1537.5px;top:818.7px;font-size:24px;line-height:36px;color:#161616;">上线W的工厂取用<span style="letter-spacing:2.7px">...</span></span>
<div class="b" style="left:1800px;top:826.7px;width:16px;height:16px;background:#0f9d58;border-radius:50%;"></div>
<span class="t " style="left:1825px;top:818.7px;font-size:24px;line-height:36px;color:#0f9d58;">已发布</span>
<span class="t " style="left:2000px;top:818.7px;font-size:24px;line-height:36px;color:#161616;">原子指标</span>
<span class="t " style="left:2263px;top:818.7px;font-size:24px;line-height:36px;color:#161616;">metric_test_勿删</span>
<span class="t " style="left:2526px;top:818.7px;font-size:24px;line-height:36px;color:#161616;letter-spacing:-0.55px;">AUTO_TEST</span>
<span class="t " style="left:2789px;top:818.7px;font-size:24px;line-height:36px;color:#161616;">Ali</span>
<div class="b" style="left:3052px;top:814.7px;width:88px;height:33px;background:#e6eaf3;border-radius:17px;"></div>
<span class="t " style="left:3052px;top:817.7px;font-size:24px;line-height:36px;color:#8e8e8e;width:88px;text-align:center;">待上架</span>
<div class="b" style="left:960px;top:917.1px;width:32px;height:32px;border:2px solid #c8cfde;background:#fff;"></div>
<span class="t " style="left:1012px;top:919.1px;font-size:24px;line-height:36px;color:#161616;">tsingfilter1</span>
<span class="t " style="left:1275px;top:919.1px;font-size:24px;line-height:36px;color:#1e6fff;">tsingfilter1</span>
<span class="t " style="left:1537.5px;top:919.1px;font-size:24px;line-height:36px;color:#161616;">tsingfilter1</span>
<div class="b" style="left:1800px;top:927.1px;width:16px;height:16px;background:#0f9d58;border-radius:50%;"></div>
<span class="t " style="left:1825px;top:919.1px;font-size:24px;line-height:36px;color:#0f9d58;">已发布</span>
<span class="t " style="left:2000px;top:919.1px;font-size:24px;line-height:36px;color:#161616;">衍生指标</span>
<span class="t " style="left:2263px;top:919.1px;font-size:24px;line-height:36px;color:#161616;">metric_test_勿删</span>
<span class="t " style="left:2526px;top:919.1px;font-size:24px;line-height:36px;color:#161616;">tsi</span>
<span class="t " style="left:2789px;top:919.1px;font-size:24px;line-height:36px;color:#161616;">ts</span>
<div class="b" style="left:3052px;top:915.1px;width:88px;height:33px;background:#e6eaf3;border-radius:17px;"></div>
<span class="t " style="left:3052px;top:918.1px;font-size:24px;line-height:36px;color:#8e8e8e;width:88px;text-align:center;">待上架</span>
<div class="b" style="left:960px;top:1017.3999999999999px;width:32px;height:32px;border:2px solid #c8cfde;background:#fff;"></div>
<span class="t " style="left:1012px;top:1019.3999999999999px;font-size:24px;line-height:36px;color:#161616;">tsingatom1</span>
<span class="t " style="left:1275px;top:1019.3999999999999px;font-size:24px;line-height:36px;color:#1e6fff;">tsingatom1</span>
<span class="t " style="left:1537.5px;top:1019.3999999999999px;font-size:24px;line-height:36px;color:#161616;">22266</span>
<div class="b" style="left:1800px;top:1027.3999999999999px;width:16px;height:16px;background:#0f9d58;border-radius:50%;"></div>
<span class="t " style="left:1825px;top:1019.3999999999999px;font-size:24px;line-height:36px;color:#0f9d58;">已发布</span>
<span class="t " style="left:2000px;top:1019.3999999999999px;font-size:24px;line-height:36px;color:#161616;">原子指标</span>
<span class="t " style="left:2263px;top:1019.3999999999999px;font-size:24px;line-height:36px;color:#161616;">metric_test_勿删</span>
<span class="t " style="left:2526px;top:1019.3999999999999px;font-size:24px;line-height:36px;color:#161616;">tsi</span>
<span class="t " style="left:2789px;top:1019.3999999999999px;font-size:24px;line-height:36px;color:#161616;">ts</span>
<div class="b" style="left:3052px;top:1015.3999999999999px;width:88px;height:33px;background:#e6eaf3;border-radius:17px;"></div>
<span class="t " style="left:3052px;top:1018.3999999999999px;font-size:24px;line-height:36px;color:#8e8e8e;width:88px;text-align:center;">待上架</span>
<div class="b" style="left:960px;top:1117.6999999999998px;width:32px;height:32px;border:2px solid #c8cfde;background:#fff;"></div>
<span class="t " style="left:1012px;top:1119.6999999999998px;font-size:24px;line-height:36px;color:#161616;">00323</span>
<span class="t " style="left:1275px;top:1119.6999999999998px;font-size:24px;line-height:36px;color:#1e6fff;">teens订单金额</span>
<span class="t " style="left:1537.5px;top:1119.6999999999998px;font-size:24px;line-height:36px;color:#161616;">年龄为12-17岁的<span style="letter-spacing:2.7px">...</span></span>
<div class="b" style="left:1800px;top:1127.6999999999998px;width:16px;height:16px;background:#cdd4e2;border-radius:50%;"></div>
<span class="t " style="left:1825px;top:1119.6999999999998px;font-size:24px;line-height:36px;color:#adadad;">已下线</span>
<span class="t " style="left:2000px;top:1119.6999999999998px;font-size:24px;line-height:36px;color:#161616;">原子指标</span>
<span class="t " style="left:2263px;top:1119.6999999999998px;font-size:24px;line-height:36px;color:#161616;">project_wedata现<span style="letter-spacing:2.7px">...</span></span>
<span class="t " style="left:2526px;top:1119.6999999999998px;font-size:24px;line-height:36px;color:#161616;">na</span>
<span class="t " style="left:2789px;top:1119.6999999999998px;font-size:24px;line-height:36px;color:#161616;">nan</span>
<div class="b" style="left:3052px;top:1115.6999999999998px;width:88px;height:33px;background:#e6eaf3;border-radius:17px;"></div>
<span class="t " style="left:3052px;top:1118.6999999999998px;font-size:24px;line-height:36px;color:#8e8e8e;width:88px;text-align:center;">待上架</span>
<div class="b" style="left:2803px;top:524.1px;width:40px;height:22px;background:#a8a9ad;border-radius:0px;"></div>
<div class="b" style="left:2843px;top:524.1px;width:10px;height:22px;background:#c6c7cb;border-radius:0px;"></div>
<div class="b" style="left:2810px;top:724.4px;width:44px;height:20px;background:#c2c2c2;border-radius:0px;"></div>
<div class="b" style="left:2854px;top:724.4px;width:16px;height:20px;background:#dedede;border-radius:0px;"></div>
<div class="b" style="left:2816px;top:814.7px;width:38px;height:18px;background:#ededed;border-radius:6px;"></div>
<div class="b" style="left:2816px;top:832.7px;width:38px;height:18px;background:#c6c6c6;border-radius:0px;"></div>
<div class="b" style="left:2854px;top:814.7px;width:16px;height:36px;background:#e6e6e6;border-radius:0px;"></div>
<div class="b" style="left:2553px;top:924.1px;width:30px;height:18px;background:#c8c8c8;border-radius:6px;"></div>
<div class="b" style="left:2583px;top:924.1px;width:18px;height:18px;background:#d6d6d6;border-radius:0px;"></div>
<div class="b" style="left:2565px;top:942.1px;width:18px;height:16px;background:#d0d0d0;border-radius:0px;"></div>
<div class="b" style="left:2583px;top:942.1px;width:18px;height:16px;background:#ececec;border-radius:0px;"></div>
<div class="b" style="left:2810px;top:924.1px;width:26px;height:18px;background:#cfcfcf;border-radius:6px;"></div>
<div class="b" style="left:2836px;top:924.1px;width:18px;height:18px;background:#bdbdbd;border-radius:0px;"></div>
<div class="b" style="left:2854px;top:924.1px;width:16px;height:18px;background:#dddddd;border-radius:0px;"></div>
<div class="b" style="left:2814px;top:942.1px;width:56px;height:18px;background:#e6e6e6;border-radius:6px;"></div>
<div class="b" style="left:2550px;top:1032.3999999999999px;width:16px;height:18px;background:#b6b6b6;border-radius:0px;"></div>
<div class="b" style="left:2566px;top:1032.3999999999999px;width:18px;height:18px;background:#9a9a9a;border-radius:0px;"></div>
<div class="b" style="left:2584px;top:1032.3999999999999px;width:18px;height:18px;background:#c4c4c4;border-radius:0px;"></div>
<div class="b" style="left:2602px;top:1032.3999999999999px;width:16px;height:18px;background:#e6e6e6;border-radius:0px;"></div>
<div class="b" style="left:2808px;top:1032.3999999999999px;width:28px;height:18px;background:#acacac;border-radius:0px;"></div>
<div class="b" style="left:2836px;top:1032.3999999999999px;width:18px;height:18px;background:#9c9c9c;border-radius:0px;"></div>
<div class="b" style="left:2854px;top:1032.3999999999999px;width:16px;height:18px;background:#c2c2c2;border-radius:0px;"></div>
<div class="b" style="left:2553px;top:1121.6999999999998px;width:97px;height:36px;background:linear-gradient(#d4d4d4 0,#d4d4d4 50%,#e2e2e2 50%);border-radius:14px;"></div>
<div class="b" style="left:2620px;top:1121.6999999999998px;width:18px;height:36px;background:linear-gradient(#c8c8c8 0,#c8c8c8 50%,#d8d8d8 50%);"></div>
<div class="b" style="left:2829px;top:1121.6999999999998px;width:77px;height:36px;background:linear-gradient(#d6d6d6 0,#d6d6d6 50%,#e0e0e0 50%);border-radius:14px 0 0 14px;"></div>
<div class="b" style="left:2852px;top:1121.6999999999998px;width:18px;height:18px;background:#cdcdcd;"></div>
<div class="b" style="left:940px;top:1185px;width:2004px;height:7px;background:#c1c1c1;"></div>
<div class="b" style="left:940px;top:1192px;width:2686px;height:2px;background:#dde1ec;"></div>
<div class="b" style="left:3214px;top:316px;width:12px;height:869px;background:linear-gradient(to right, rgba(0,0,0,0), rgba(0,0,0,0.05) 50%, rgba(0,0,0,0.13));"></div>
<div class="b" style="left:3226px;top:316px;width:400px;height:68px;background:#f7f8fa;"></div>
<div class="b" style="left:3226px;top:384px;width:400px;height:200px;background:#ebeef3;"></div>
<div class="b" style="left:3226px;top:584px;width:400px;height:601px;background:#fff;"></div>
<div class="b" style="left:3226px;top:483px;width:400px;height:2px;background:#eef1f6;"></div>
<div class="b" style="left:3226px;top:683.3px;width:400px;height:2px;background:#e6e9f0;"></div>
<div class="b" style="left:3226px;top:783.6px;width:400px;height:2px;background:#e6e9f0;"></div>
<div class="b" style="left:3226px;top:884px;width:400px;height:2px;background:#e6e9f0;"></div>
<div class="b" style="left:3226px;top:984.3px;width:400px;height:2px;background:#e6e9f0;"></div>
<div class="b" style="left:3226px;top:1084.6px;width:400px;height:2px;background:#e6e9f0;"></div>
<span class="t " style="left:3247px;top:334.0px;font-size:24px;line-height:36px;color:#8e8e8e;font-weight:700;">操作</span>
<span class="t " style="left:3247px;top:419.1px;font-size:24px;line-height:36px;color:#1e6fff;">申请上架</span>
<span class="t " style="left:3358px;top:419.1px;font-size:24px;line-height:36px;color:#b6b6b6;">申请下架</span>
<span class="t " style="left:3490px;top:419.1px;font-size:24px;line-height:36px;color:#1e6fff;">更多</span>
<svg class="b" style="left:3548px;top:434.1px;" width="13" height="10" viewBox="0 0 13 10" fill="none"><path d="M0.5 1 H12.5 L6.5 9 Z" fill="#1e6fff"/></svg>
<span class="t " style="left:3247px;top:519.1px;font-size:24px;line-height:36px;color:#b6b6b6;">申请上架</span>
<span class="t " style="left:3358px;top:519.1px;font-size:24px;line-height:36px;color:#1e6fff;">申请下架</span>
<span class="t " style="left:3490px;top:519.1px;font-size:24px;line-height:36px;color:#1e6fff;">更多</span>
<svg class="b" style="left:3548px;top:534.1px;" width="13" height="10" viewBox="0 0 13 10" fill="none"><path d="M0.5 1 H12.5 L6.5 9 Z" fill="#1e6fff"/></svg>
<span class="t " style="left:3247px;top:619.1px;font-size:24px;line-height:36px;color:#1e6fff;">申请上架</span>
<span class="t " style="left:3358px;top:619.1px;font-size:24px;line-height:36px;color:#b6b6b6;">申请下架</span>
<span class="t " style="left:3490px;top:619.1px;font-size:24px;line-height:36px;color:#1e6fff;">更多</span>
<svg class="b" style="left:3548px;top:634.1px;" width="13" height="10" viewBox="0 0 13 10" fill="none"><path d="M0.5 1 H12.5 L6.5 9 Z" fill="#1e6fff"/></svg>
<span class="t " style="left:3247px;top:719.4px;font-size:24px;line-height:36px;color:#1e6fff;">申请上架</span>
<span class="t " style="left:3358px;top:719.4px;font-size:24px;line-height:36px;color:#b6b6b6;">申请下架</span>
<span class="t " style="left:3490px;top:719.4px;font-size:24px;line-height:36px;color:#1e6fff;">更多</span>
<svg class="b" style="left:3548px;top:734.4px;" width="13" height="10" viewBox="0 0 13 10" fill="none"><path d="M0.5 1 H12.5 L6.5 9 Z" fill="#1e6fff"/></svg>
<span class="t " style="left:3247px;top:819.7px;font-size:24px;line-height:36px;color:#1e6fff;">申请上架</span>
<span class="t " style="left:3358px;top:819.7px;font-size:24px;line-height:36px;color:#b6b6b6;">申请下架</span>
<span class="t " style="left:3490px;top:819.7px;font-size:24px;line-height:36px;color:#1e6fff;">更多</span>
<svg class="b" style="left:3548px;top:834.7px;" width="13" height="10" viewBox="0 0 13 10" fill="none"><path d="M0.5 1 H12.5 L6.5 9 Z" fill="#1e6fff"/></svg>
<span class="t " style="left:3247px;top:920.1px;font-size:24px;line-height:36px;color:#1e6fff;">申请上架</span>
<span class="t " style="left:3358px;top:920.1px;font-size:24px;line-height:36px;color:#b6b6b6;">申请下架</span>
<span class="t " style="left:3490px;top:920.1px;font-size:24px;line-height:36px;color:#1e6fff;">更多</span>
<svg class="b" style="left:3548px;top:935.1px;" width="13" height="10" viewBox="0 0 13 10" fill="none"><path d="M0.5 1 H12.5 L6.5 9 Z" fill="#1e6fff"/></svg>
<span class="t " style="left:3247px;top:1020.3999999999999px;font-size:24px;line-height:36px;color:#1e6fff;">申请上架</span>
<span class="t " style="left:3358px;top:1020.3999999999999px;font-size:24px;line-height:36px;color:#b6b6b6;">申请下架</span>
<span class="t " style="left:3490px;top:1020.3999999999999px;font-size:24px;line-height:36px;color:#1e6fff;">更多</span>
<svg class="b" style="left:3548px;top:1035.3999999999999px;" width="13" height="10" viewBox="0 0 13 10" fill="none"><path d="M0.5 1 H12.5 L6.5 9 Z" fill="#1e6fff"/></svg>
<span class="t " style="left:3247px;top:1120.6999999999998px;font-size:24px;line-height:36px;color:#b6b6b6;">申请上架</span>
<span class="t " style="left:3358px;top:1120.6999999999998px;font-size:24px;line-height:36px;color:#b6b6b6;">申请下架</span>
<span class="t " style="left:3490px;top:1120.6999999999998px;font-size:24px;line-height:36px;color:#1e6fff;">更多</span>
<svg class="b" style="left:3548px;top:1135.6999999999998px;" width="13" height="10" viewBox="0 0 13 10" fill="none"><path d="M0.5 1 H12.5 L6.5 9 Z" fill="#1e6fff"/></svg>
<span class="t " style="left:960px;top:1227.0px;font-size:24px;line-height:36px;color:#929292;letter-spacing:2.9px;">共 8 条</span>
<span class="t " style="left:2995px;top:1225.0px;font-size:24px;line-height:36px;color:#1a1a1a;">50</span>
<svg class="b" style="left:3033px;top:1236px;" width="20" height="14" viewBox="0 0 20 14" fill="none"><path d="M2 2.5 L10 10.5 L18 2.5" stroke="#222" stroke-width="2.6"/></svg>
<span class="t " style="left:3066px;top:1225.0px;font-size:24px;line-height:36px;color:#8c8c8c;">条 / 页</span>
<div class="b" style="left:3175px;top:1216px;width:431px;height:51px;background:#c9d0e0;"></div>
<div class="b" style="left:3177px;top:1218px;width:49px;height:47px;background:#e8ebf2;"></div>
<div class="b" style="left:3228px;top:1218px;width:48px;height:47px;background:#e8ebf2;"></div>
<div class="b" style="left:3278px;top:1218px;width:126px;height:47px;background:#ffffff;"></div>
<div class="b" style="left:3406px;top:1218px;width:99px;height:47px;background:#f3f4f8;"></div>
<div class="b" style="left:3507px;top:1218px;width:48px;height:47px;background:#e8ebf2;"></div>
<div class="b" style="left:3557px;top:1218px;width:48px;height:47px;background:#e8ebf2;"></div>
<svg class="b" style="left:3190px;top:1231px;" width="22" height="20" viewBox="0 0 22 20" fill="none"><path d="M3.4 2 V18" stroke="#7d7d82" stroke-width="3"/><path d="M18.6 2 V18 L7 10 Z" fill="#7d7d82"/></svg>
<svg class="b" style="left:3244px;top:1231px;" width="16" height="20" viewBox="0 0 16 20" fill="none"><path d="M14.6 2 V18 L2.4 10 Z" fill="#7d7d82"/></svg>
<span class="t " style="left:3276px;top:1225.0px;font-size:24px;line-height:36px;color:#1a1a1a;width:128px;text-align:center;">1</span>
<span class="t " style="left:3404px;top:1225.0px;font-size:24px;line-height:36px;color:#1a1a1a;width:101px;text-align:center;">/ 1 页</span>
<svg class="b" style="left:3523px;top:1231px;" width="16" height="20" viewBox="0 0 16 20" fill="none"><path d="M1.4 2 V18 L13.6 10 Z" fill="#7d7d82"/></svg>
<svg class="b" style="left:3570px;top:1231px;" width="22" height="20" viewBox="0 0 22 20" fill="none"><path d="M18.6 2 V18" stroke="#7d7d82" stroke-width="3"/><path d="M3.4 2 V18 L15 10 Z" fill="#7d7d82"/></svg>
<div class="b" style="left:1738px;top:292px;width:300px;height:240px;background:#fff;box-shadow:0 5px 24px rgba(0,0,0,0.15),0 0 2px rgba(0,0,0,0.05);"></div>
<span class="t " style="left:1758px;top:306.0px;font-size:24px;line-height:36px;color:#1a1a1a;">批量移出</span>
<span class="t " style="left:1758px;top:366.0px;font-size:24px;line-height:36px;color:#1a1a1a;">批量下载</span>
<span class="t " style="left:1758px;top:426.0px;font-size:24px;line-height:36px;color:#1a1a1a;">批量转交业务负责人</span>
<span class="t " style="left:1758px;top:486.0px;font-size:24px;line-height:36px;color:#1a1a1a;">批量转交技术负责人</span>
<div class="b" style="left:1728px;top:406px;width:266px;height:69px;border:8px solid #f55154;border-radius:6px;"></div>
</div></body></html>
